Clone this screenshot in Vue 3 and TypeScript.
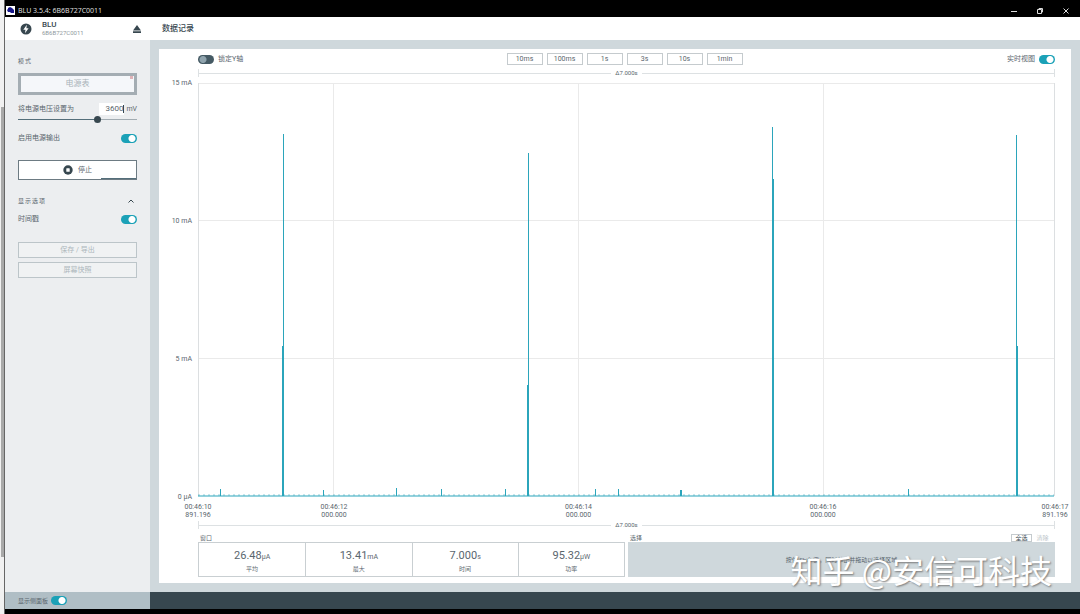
<script setup lang="ts">
import { ref } from 'vue'

const voltage = ref('3600')
const slider = ref(68)
const ranges = ['10ms', '100ms', '1s', '3s', '10s', '1min']

const yTicks = [
  { at: 0, label: '15 mA' },
  { at: 33.33, label: '10 mA' },
  { at: 66.67, label: '5 mA' },
  { at: 100, label: '0 µA' },
]
const xTicks = [
  { at: 0, time: '00:46:10', frac: '891.196' },
  { at: 15.87, time: '00:46:12', frac: '000.000' },
  { at: 44.4, time: '00:46:14', frac: '000.000' },
  { at: 72.93, time: '00:46:16', frac: '000.000' },
  { at: 100, time: '00:46:17', frac: '891.196' },
]

// Plot units: 857 x 414, baseline at y = 413
const spikes = [
  { x: 85, top: 51, body: 85, thick: 263 },
  { x: 330, top: 70, body: 330, thick: 302 },
  { x: 574, top: 44, body: 575, thick: 96 },
  { x: 818, top: 52, body: 819, thick: 263 },
]
const blips = [
  { x: 22, h: 7 },
  { x: 125, h: 6 },
  { x: 198, h: 8 },
  { x: 243, h: 7 },
  { x: 307, h: 7 },
  { x: 397, h: 7 },
  { x: 420, h: 7 },
  { x: 483, h: 6 },
  { x: 710, h: 7 },
]
const spikePath = spikes.map((s) => `M${s.x + 0.5} 413V${s.top}`).join('')
const thickPath = spikes.map((s) => `M${s.body} 413V${s.thick}`).join('')
const blipPath = blips.map((b) => `M${b.x + 0.5} 413V${413 - b.h}`).join('')

const stats = [
  { value: '26.48', unit: 'µA', name: '平均' },
  { value: '13.41', unit: 'mA', name: '最大' },
  { value: '7.000', unit: 's', name: '时间' },
  { value: '95.32', unit: 'µW', name: '功率' },
]
</script>

<template>
  <div class="desktop">
    <div class="edge"><div class="edge-thumb"></div></div>
    <div class="window">
      <div class="titlebar">
        <svg class="app-icon" viewBox="0 0 9 9" aria-hidden="true">
          <rect width="9" height="9" fill="#fff" />
          <path d="M1 4 2 3V2l2-1 2 1 2 2v3H5L4 6H2z" fill="#17178a" />
        </svg>
        <span class="title">BLU 3.5.4: 6B6B727C0011</span>
        <div class="win-buttons">
          <button type="button" aria-label="最小化">
            <svg viewBox="0 0 8 8"><path d="M1 4.5h6" /></svg>
          </button>
          <button type="button" aria-label="还原">
            <svg viewBox="0 0 8 8"><path d="M1.500 2.500h4v4h-4zM3 2.500V1.500h3.500V5H5.500" /></svg>
          </button>
          <button type="button" aria-label="关闭">
            <svg viewBox="0 0 8 8"><path d="m1.500 1.500 5 5m0-5-5 5" /></svg>
          </button>
        </div>
      </div>

      <header class="header">
        <div class="device">
          <svg class="bolt" viewBox="0 0 12 12" aria-hidden="true">
            <circle cx="6" cy="6" r="5.500" fill="#37474f" />
            <path d="M6.800 1.800 3.300 6.800h2.200L5 10.200l3.600-5H6.400z" fill="#fff" />
          </svg>
          <div class="device-text">
            <strong>BLU</strong>
            <span>6B6B727C0011</span>
          </div>
          <button type="button" class="eject" aria-label="弹出">
            <svg viewBox="0 0 10 10"><path d="M5 1 9 6.500H1zM1 7.300h8V9H1z" fill="#37474f" /></svg>
          </button>
        </div>
        <h1>数据记录</h1>
      </header>

      <div class="body">
        <aside class="side">
          <h2>模式</h2>
          <button type="button" class="mode">电源表<i></i></button>
          <div class="row volt">
            <label for="mv">将电源电压设置为</label>
            <span class="mv-box"><input id="mv" v-model="voltage" type="text" /><i class="caret"></i></span>
            <span class="mv">mV</span>
          </div>
          <input v-model="slider" class="slider" type="range" min="0" max="100" aria-label="电源电压" />
          <label class="row power">启用电源输出<input class="switch" type="checkbox" checked /></label>
          <button type="button" class="stop">
            <svg viewBox="0 0 10 10" aria-hidden="true">
              <circle cx="5" cy="5" r="4.700" fill="#37474f" />
              <rect x="3.300" y="3.300" width="3.400" height="3.400" rx=".5" fill="#fff" />
            </svg>
            停止
          </button>
          <div class="row options">
            <h2>显示选项</h2>
            <button type="button" class="collapse" aria-label="收起">
              <svg viewBox="0 0 8 8"><path d="M1.500 5.500 4 3l2.500 2.500" /></svg>
            </button>
          </div>
          <label class="row stamp">时间戳<input class="switch" type="checkbox" checked /></label>
          <button type="button" class="ghost">保存 / 导出</button>
          <button type="button" class="ghost">屏幕快照</button>
        </aside>

        <main class="main">
          <section class="panel">
            <div class="toolbar">
              <label class="left"><input class="switch off" type="checkbox" />锁定Y轴</label>
              <div class="ranges">
                <button v-for="r in ranges" :key="r" type="button">{{ r }}</button>
              </div>
              <label class="right">实时视图<input class="switch" type="checkbox" checked /></label>
            </div>
            <div class="delta"><span>Δ7.000s</span></div>
            <div class="plot">
              <svg viewBox="0 0 857 414" preserveAspectRatio="none" role="img" aria-label="电流曲线">
                <path class="grid" d="M0 .5H857M0 137.500H857M0 275.500H857M135.500 0V413M380.500 0V413M625.500 0V413" />
                <path class="frame" d="M.5 0V413M856.500 0V413" />
                <path class="trace noise" d="M0 412H856" />
                <path class="trace" d="M0 413H856" />
                <path class="trace" :d="blipPath" />
                <path class="trace" :d="spikePath" />
                <path class="trace thick" :d="thickPath" />
                <path class="trace" d="M482.500 413V407" />
              </svg>
              <span v-for="t in yTicks" :key="t.label" class="ytick" :style="{ top: t.at + '%' }">{{ t.label }}</span>
              <span v-for="t in xTicks" :key="t.time" class="xtick" :style="{ left: t.at + '%' }">{{ t.time }}<br />{{ t.frac }}</span>
            </div>
            <div class="delta low"><span>Δ7.000s</span></div>
            <div class="summary">
              <div class="group">
                <div class="caption">窗口</div>
                <div class="stats">
                  <div v-for="s in stats" :key="s.name" class="stat">
                    <div class="value">{{ s.value }}<small>{{ s.unit }}</small></div>
                    <div class="name">{{ s.name }}</div>
                  </div>
                </div>
              </div>
              <div class="group">
                <div class="caption">
                  选择
                  <div class="select-buttons">
                    <button type="button" class="all">全选</button>
                    <button type="button" class="clear">清除</button>
                  </div>
                </div>
                <div class="hint">按住 Shift 键，同时单击并拖动以选择区域</div>
              </div>
            </div>
          </section>
        </main>
      </div>

      <footer class="footer">
        <label>显示侧面板<input class="switch" type="checkbox" checked /></label>
      </footer>
    </div>
    <div class="watermark">知乎 @安信可科技</div>
  </div>
</template>

<style>
html,
body {
  margin: 0;
  background: #000;
}
</style>

<style scoped>
* {
  box-sizing: border-box;
}
.desktop {
  position: relative;
  display: flex;
  min-height: 100vh;
  font: 7px/10px Roboto, 'Noto Sans CJK SC', sans-serif;
  color: #5a666e;
}
button,
input {
  font: inherit;
  color: inherit;
  margin: 0;
  padding: 0;
}
button {
  border: 0;
  background: none;
}
svg {
  display: block;
}
h1,
h2 {
  margin: 0;
}
.edge {
  width: 5px;
  padding: 107px 0 57px;
  display: flex;
  background: #f1f1f1;
  border-right: 1px solid #666;
}
.edge-thumb {
  flex: 1;
  margin-left: 1px;
  background: #a9a9a9;
}
.window {
  flex: 1;
  display: flex;
  flex-direction: column;
  padding-bottom: 5px;
  background: #000;
  min-width: 0;
}
.titlebar {
  display: flex;
  align-items: center;
  height: 17px;
  padding: 4px 10px 0 0;
  color: #ddd;
  font-family: 'Noto Sans', sans-serif;
}
.app-icon {
  width: 9px;
  height: 9px;
  margin: 0 3px 0 1px;
}
.title {
  flex: 1;
}
.win-buttons {
  display: flex;
  gap: 18px;
}
.win-buttons svg {
  width: 8px;
  height: 8px;
  fill: none;
  stroke: #ddd;
  stroke-width: 1;
}
.header {
  display: flex;
  align-items: center;
  height: 23px;
  background: #fff;
}
.device {
  display: flex;
  align-items: center;
  width: 145px;
  padding: 0 8px 0 15px;
}
.bolt {
  width: 12px;
  height: 12px;
}
.device-text {
  display: flex;
  flex-direction: column;
  flex: 1;
  margin-left: 10px;
  padding-top: 1px;
  font-size: 6px;
  line-height: 8px;
  color: #90999e;
}
.device-text strong {
  font-size: 8px;
  font-weight: 500;
  color: #37474f;
}
.eject svg {
  width: 10px;
  height: 10px;
}
.header h1 {
  margin-left: 12px;
  font-size: 8px;
  font-weight: 500;
  color: #37474f;
}
.body {
  display: flex;
  flex: 1;
}
.side {
  width: 145px;
  padding: 15px 13px;
  display: flex;
  flex-direction: column;
  background: #eceef0;
}
h2 {
  font-size: 6px;
  line-height: 12px;
  font-weight: 400;
  letter-spacing: 1px;
}
.mode {
  position: relative;
  height: 22px;
  margin-top: 6px;
  border: 3px solid #a4adb3;
  background: #f5f7fa;
  color: #a9b3b9;
  font-size: 8px;
}
.mode i {
  position: absolute;
  top: 0;
  right: 1px;
  width: 3px;
  height: 3px;
  background: #e0b3b8;
}
.row {
  display: flex;
  align-items: center;
  justify-content: space-between;
}
.volt {
  margin-top: 7px;
  height: 13px;
}
.volt label {
  flex: 1;
  white-space: nowrap;
}
.mv-box {
  display: flex;
  align-items: center;
  justify-content: flex-end;
  width: 25px;
  height: 12px;
  background: #fff;
}
.mv-box input {
  width: 20px;
  border: 0;
  outline: 0;
  background: none;
  font-size: 8px;
  text-align: right;
}
.caret {
  width: 1px;
  height: 8px;
  background: #37474f;
}
.mv {
  margin-left: 2px;
}
.slider {
  appearance: none;
  width: 100%;
  height: 8px;
  background: linear-gradient(90deg, #546e7a 68%, #a2acb2 68%) center / 100% 1px no-repeat;
}
.slider::-webkit-slider-thumb {
  appearance: none;
  width: 7px;
  height: 7px;
  border-radius: 50%;
  background: #37474f;
}
.switch {
  appearance: none;
  flex: none;
  width: 16px;
  height: 9px;
  border-radius: 5px;
  background: radial-gradient(circle at 11px 50%, #fff 3px, transparent 4px) #1ba1b7;
}
.switch.off {
  background: radial-gradient(circle at 5px 50%, #90a4ae 3px, transparent 4px) #455a64;
}
.power {
  margin-top: 10px;
}
.stop {
  display: flex;
  align-items: center;
  justify-content: center;
  gap: 5px;
  height: 20px;
  margin-top: 17px;
  border: 1px solid #6d7b83;
  background: linear-gradient(#546e7a, #546e7a) right bottom / 35px 1px no-repeat #fff;
}
.stop svg {
  width: 10px;
  height: 10px;
}
.options {
  margin-top: 15px;
}
.collapse {
  margin-right: 2px;
}
.collapse svg {
  width: 8px;
  height: 8px;
  fill: none;
  stroke: #37474f;
}
.stamp {
  margin: 7px 0 18px;
}
.ghost {
  height: 16px;
  margin-bottom: 4px;
  border: 1px solid #bcc5c9;
  background: #f0f2f3;
  color: #adb7bc;
}
.main {
  flex: 1;
  display: flex;
  padding: 9px;
  background: #cfd8dc;
  min-width: 0;
}
.panel {
  flex: 1;
  display: flex;
  flex-direction: column;
  padding: 0 16px 6px 39px;
  background: #fff;
}
.toolbar {
  display: grid;
  grid-template-columns: 1fr auto 1fr;
  align-items: center;
  height: 20px;
}
.toolbar label {
  display: flex;
  align-items: center;
  gap: 4px;
}
.toolbar .right {
  justify-content: flex-end;
}
.ranges {
  display: flex;
  gap: 4px;
  margin-right: 4px;
}
.ranges button {
  width: 36px;
  height: 12px;
  border: 1px solid #c5cbce;
  background: #fff;
}
.delta {
  display: flex;
  align-items: center;
  gap: 4px;
  height: 8px;
  margin-bottom: 6px;
  border: solid #dde1e3;
  border-width: 0 1px;
  font-size: 6px;
  line-height: 8px;
}
.delta::before,
.delta::after {
  content: '';
  flex: 1;
  height: 1px;
  background: #dde1e3;
}
.delta.low {
  margin: 24px 0 0;
}
.plot {
  position: relative;
  flex: 1;
  min-height: 200px;
}
.plot svg {
  position: absolute;
  width: 100%;
  height: 100%;
  overflow: visible;
}
.plot path {
  fill: none;
  vector-effect: non-scaling-stroke;
}
.grid {
  stroke: #eaeaea;
}
.frame {
  stroke: #dcdfe1;
}
.trace {
  stroke: #2ba5bb;
}
.noise {
  stroke-dasharray: 2 3;
  opacity: 0.5;
}
.thick {
  stroke-width: 2;
}
.ytick {
  position: absolute;
  right: 100%;
  margin-right: 6px;
  transform: translateY(-50%);
  white-space: nowrap;
}
.xtick {
  position: absolute;
  top: 100%;
  margin-top: 6px;
  transform: translateX(-50%);
  line-height: 8px;
  text-align: center;
}
.summary {
  display: grid;
  grid-template-columns: 1fr 1fr;
  gap: 3px;
}
.caption {
  display: flex;
  align-items: flex-end;
  justify-content: space-between;
  height: 13px;
  padding: 0 2px;
  font-size: 6px;
  line-height: 8px;
}
.select-buttons {
  display: flex;
}
.select-buttons button {
  width: 21px;
  height: 8px;
  line-height: 6px;
}
.select-buttons .all {
  border: 1px solid #c5cbce;
  color: #37474f;
}
.select-buttons .clear {
  color: #bcc5c9;
}
.stats {
  display: grid;
  grid-template-columns: repeat(4, 1fr);
  height: 35px;
  border: 1px solid #c9cfd2;
}
.stat {
  padding-top: 6px;
  text-align: center;
  font-size: 6px;
}
.stat + .stat {
  border-left: 1px solid #c9cfd2;
}
.value {
  font-size: 11px;
  line-height: 13px;
}
.value small {
  font-size: 7px;
}
.hint {
  display: flex;
  align-items: center;
  justify-content: center;
  height: 35px;
  background: #cfd8dc;
  font-size: 6px;
}
.footer {
  display: flex;
  align-items: center;
  height: 17px;
  background: linear-gradient(90deg, #b0bec5 145px, #37474f 145px);
}
.footer label {
  display: flex;
  align-items: center;
  gap: 3px;
  padding-left: 13px;
  font-size: 6px;
}
.watermark {
  position: absolute;
  right: 28px;
  bottom: 26px;
  font: 32px/38px 'Noto Sans CJK SC', sans-serif;
  color: #fff;
  text-shadow: 1px 1px 2px #777;
  pointer-events: none;
}
</style>
